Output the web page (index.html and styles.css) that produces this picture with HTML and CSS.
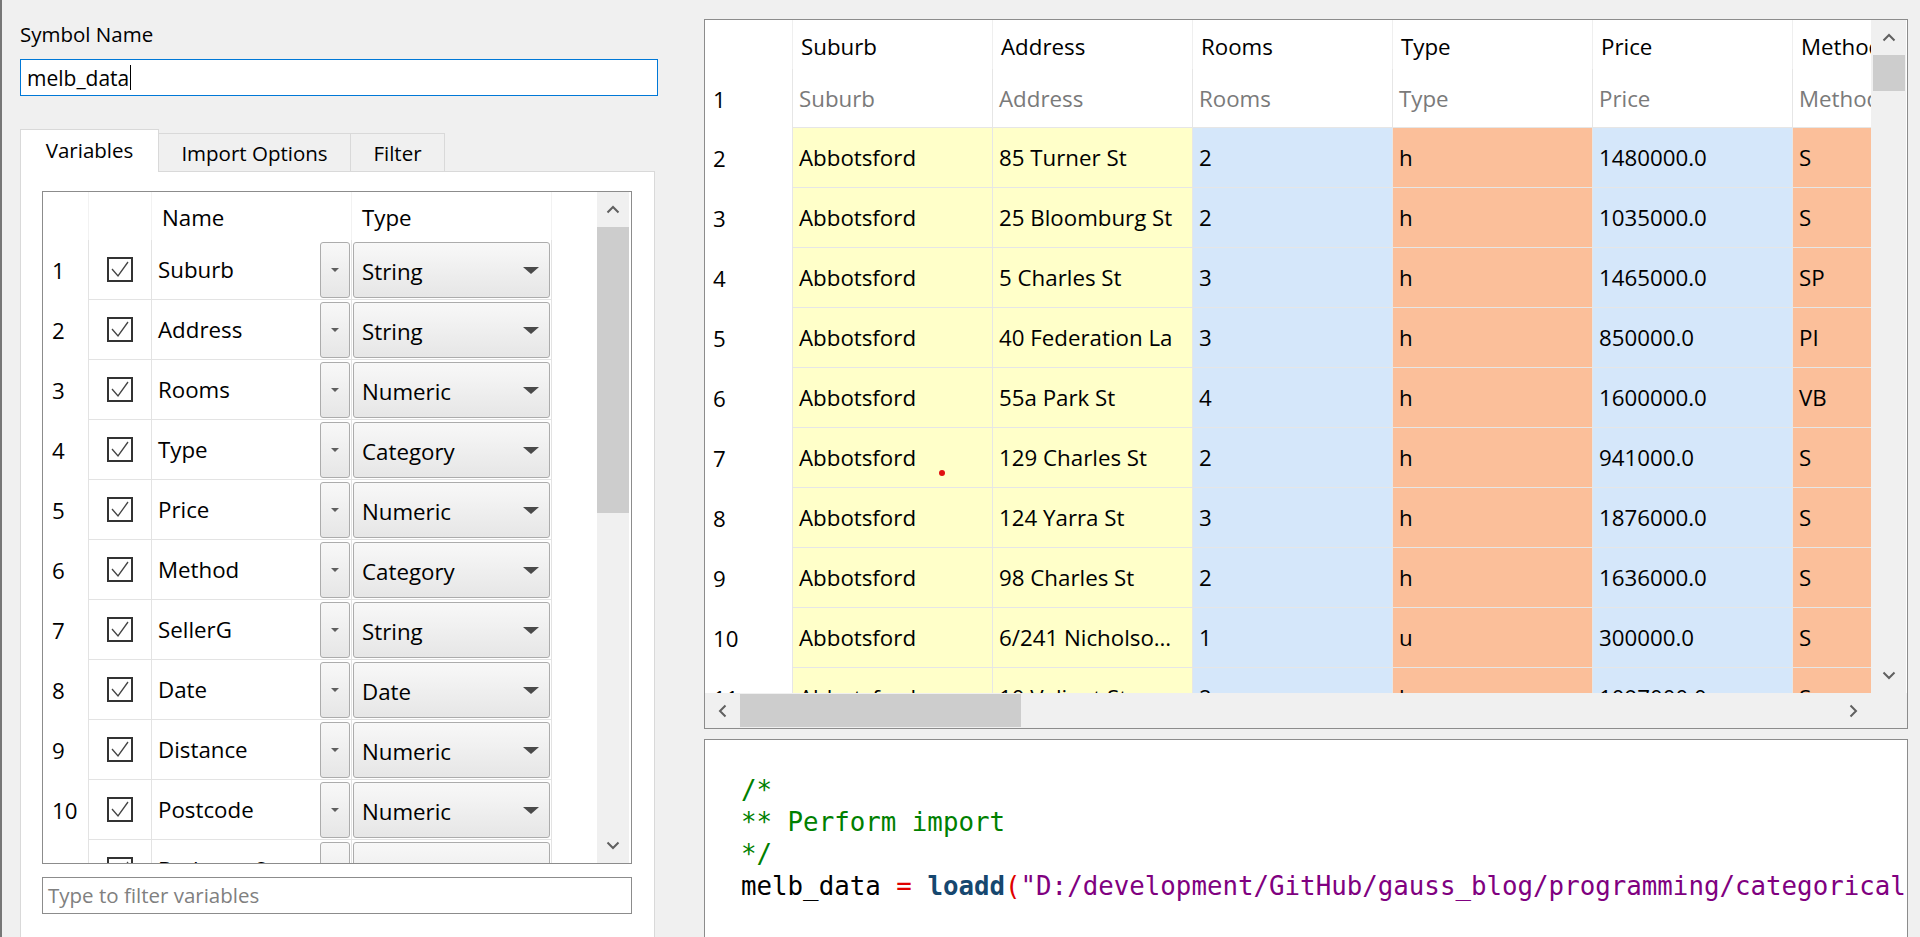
FILE: index.html
```html
<!DOCTYPE html>
<html>
<head>
<meta charset="utf-8">
<link rel="stylesheet" href="styles.css">
</head>
<body>
<div class="app">
  <div class="left">
    <div class="sym-label">Symbol Name</div>
    <div class="sym-input"><span>melb_data</span><span class="caret"></span></div>
    <div class="tabbar">
      <div class="tab active">Variables</div>
      <div class="tab tab-io">Import Options</div>
      <div class="tab tab-filter">Filter</div>
    </div>
    <div class="pane">
      <div class="vgrid">
        <div class="vbody">
          <div class="vhead">
            <div class="vnum"></div>
            <div class="vchk"></div>
            <div class="vname">Name</div>
            <div class="vtype">Type</div>
          </div>
          <div class="vrow"><div class="vnum">1</div><div class="vchk"><span class="cb"><svg width="22" height="21" viewBox="0 0 22 21"><polyline points="3,10 9,17 19,3" fill="none" stroke="#444" stroke-width="1.3"/></svg></span></div><div class="vname"><span class="nm">Suburb</span><span class="sbtn"><i class="tri-s"></i></span></div><div class="vtype"><span class="combo">String<i class="tri"></i></span></div></div>
          <div class="vrow"><div class="vnum">2</div><div class="vchk"><span class="cb"><svg width="22" height="21" viewBox="0 0 22 21"><polyline points="3,10 9,17 19,3" fill="none" stroke="#444" stroke-width="1.3"/></svg></span></div><div class="vname"><span class="nm">Address</span><span class="sbtn"><i class="tri-s"></i></span></div><div class="vtype"><span class="combo">String<i class="tri"></i></span></div></div>
          <div class="vrow"><div class="vnum">3</div><div class="vchk"><span class="cb"><svg width="22" height="21" viewBox="0 0 22 21"><polyline points="3,10 9,17 19,3" fill="none" stroke="#444" stroke-width="1.3"/></svg></span></div><div class="vname"><span class="nm">Rooms</span><span class="sbtn"><i class="tri-s"></i></span></div><div class="vtype"><span class="combo">Numeric<i class="tri"></i></span></div></div>
          <div class="vrow"><div class="vnum">4</div><div class="vchk"><span class="cb"><svg width="22" height="21" viewBox="0 0 22 21"><polyline points="3,10 9,17 19,3" fill="none" stroke="#444" stroke-width="1.3"/></svg></span></div><div class="vname"><span class="nm">Type</span><span class="sbtn"><i class="tri-s"></i></span></div><div class="vtype"><span class="combo">Category<i class="tri"></i></span></div></div>
          <div class="vrow"><div class="vnum">5</div><div class="vchk"><span class="cb"><svg width="22" height="21" viewBox="0 0 22 21"><polyline points="3,10 9,17 19,3" fill="none" stroke="#444" stroke-width="1.3"/></svg></span></div><div class="vname"><span class="nm">Price</span><span class="sbtn"><i class="tri-s"></i></span></div><div class="vtype"><span class="combo">Numeric<i class="tri"></i></span></div></div>
          <div class="vrow"><div class="vnum">6</div><div class="vchk"><span class="cb"><svg width="22" height="21" viewBox="0 0 22 21"><polyline points="3,10 9,17 19,3" fill="none" stroke="#444" stroke-width="1.3"/></svg></span></div><div class="vname"><span class="nm">Method</span><span class="sbtn"><i class="tri-s"></i></span></div><div class="vtype"><span class="combo">Category<i class="tri"></i></span></div></div>
          <div class="vrow"><div class="vnum">7</div><div class="vchk"><span class="cb"><svg width="22" height="21" viewBox="0 0 22 21"><polyline points="3,10 9,17 19,3" fill="none" stroke="#444" stroke-width="1.3"/></svg></span></div><div class="vname"><span class="nm">SellerG</span><span class="sbtn"><i class="tri-s"></i></span></div><div class="vtype"><span class="combo">String<i class="tri"></i></span></div></div>
          <div class="vrow"><div class="vnum">8</div><div class="vchk"><span class="cb"><svg width="22" height="21" viewBox="0 0 22 21"><polyline points="3,10 9,17 19,3" fill="none" stroke="#444" stroke-width="1.3"/></svg></span></div><div class="vname"><span class="nm">Date</span><span class="sbtn"><i class="tri-s"></i></span></div><div class="vtype"><span class="combo">Date<i class="tri"></i></span></div></div>
          <div class="vrow"><div class="vnum">9</div><div class="vchk"><span class="cb"><svg width="22" height="21" viewBox="0 0 22 21"><polyline points="3,10 9,17 19,3" fill="none" stroke="#444" stroke-width="1.3"/></svg></span></div><div class="vname"><span class="nm">Distance</span><span class="sbtn"><i class="tri-s"></i></span></div><div class="vtype"><span class="combo">Numeric<i class="tri"></i></span></div></div>
          <div class="vrow"><div class="vnum">10</div><div class="vchk"><span class="cb"><svg width="22" height="21" viewBox="0 0 22 21"><polyline points="3,10 9,17 19,3" fill="none" stroke="#444" stroke-width="1.3"/></svg></span></div><div class="vname"><span class="nm">Postcode</span><span class="sbtn"><i class="tri-s"></i></span></div><div class="vtype"><span class="combo">Numeric<i class="tri"></i></span></div></div>
          <div class="vrow"><div class="vnum">11</div><div class="vchk"><span class="cb"><svg width="22" height="21" viewBox="0 0 22 21"><polyline points="3,10 9,17 19,3" fill="none" stroke="#444" stroke-width="1.3"/></svg></span></div><div class="vname"><span class="nm">Bedroom2</span><span class="sbtn"><i class="tri-s"></i></span></div><div class="vtype"><span class="combo">Numeric<i class="tri"></i></span></div></div>
        </div>
        <div class="vscroll">
          <div class="sb-arrow"><svg width="14" height="9" viewBox="0 0 14 9"><polyline points="1.5,7.5 7,2 12.5,7.5" fill="none" stroke="#606060" stroke-width="2"/></svg></div>
          <div class="vthumb"></div>
          <div class="sb-fill"></div>
          <div class="sb-arrow"><svg width="14" height="9" viewBox="0 0 14 9"><polyline points="1.5,1.5 7,7 12.5,1.5" fill="none" stroke="#606060" stroke-width="2"/></svg></div>
        </div>
      </div>
      <div class="filter">Type to filter variables</div>
    </div>
  </div>

  <div class="right">
    <div class="tbox">
      <div class="tmain">
        <div class="tview">
          <div class="trow thead"><div class="rn"></div><div class="c">Suburb</div><div class="c">Address</div><div class="c">Rooms</div><div class="c">Type</div><div class="c">Price</div><div class="c">Method</div></div>
          <div class="trow tnames"><div class="rn">1</div><div class="c">Suburb</div><div class="c">Address</div><div class="c">Rooms</div><div class="c">Type</div><div class="c">Price</div><div class="c">Method</div></div>
          <div class="trow"><div class="rn">2</div><div class="c y">Abbotsford</div><div class="c y">85 Turner St</div><div class="c b">2</div><div class="c s">h</div><div class="c b">1480000.0</div><div class="c s">S</div></div>
          <div class="trow"><div class="rn">3</div><div class="c y">Abbotsford</div><div class="c y">25 Bloomburg St</div><div class="c b">2</div><div class="c s">h</div><div class="c b">1035000.0</div><div class="c s">S</div></div>
          <div class="trow"><div class="rn">4</div><div class="c y">Abbotsford</div><div class="c y">5 Charles St</div><div class="c b">3</div><div class="c s">h</div><div class="c b">1465000.0</div><div class="c s">SP</div></div>
          <div class="trow"><div class="rn">5</div><div class="c y">Abbotsford</div><div class="c y">40 Federation La</div><div class="c b">3</div><div class="c s">h</div><div class="c b">850000.0</div><div class="c s">PI</div></div>
          <div class="trow"><div class="rn">6</div><div class="c y">Abbotsford</div><div class="c y">55a Park St</div><div class="c b">4</div><div class="c s">h</div><div class="c b">1600000.0</div><div class="c s">VB</div></div>
          <div class="trow"><div class="rn">7</div><div class="c y">Abbotsford</div><div class="c y">129 Charles St</div><div class="c b">2</div><div class="c s">h</div><div class="c b">941000.0</div><div class="c s">S</div></div>
          <div class="trow"><div class="rn">8</div><div class="c y">Abbotsford</div><div class="c y">124 Yarra St</div><div class="c b">3</div><div class="c s">h</div><div class="c b">1876000.0</div><div class="c s">S</div></div>
          <div class="trow"><div class="rn">9</div><div class="c y">Abbotsford</div><div class="c y">98 Charles St</div><div class="c b">2</div><div class="c s">h</div><div class="c b">1636000.0</div><div class="c s">S</div></div>
          <div class="trow"><div class="rn">10</div><div class="c y">Abbotsford</div><div class="c y">6/241 Nicholso…</div><div class="c b">1</div><div class="c s">u</div><div class="c b">300000.0</div><div class="c s">S</div></div>
          <div class="trow"><div class="rn">11</div><div class="c y">Abbotsford</div><div class="c y">10 Valiant St</div><div class="c b">2</div><div class="c s">h</div><div class="c b">1097000.0</div><div class="c s">S</div></div>
        </div>
        <div class="tvscroll">
          <div class="sb-arrow"><svg width="14" height="9" viewBox="0 0 14 9"><polyline points="1.5,7.5 7,2 12.5,7.5" fill="none" stroke="#606060" stroke-width="2"/></svg></div>
          <div class="tvthumb"></div>
          <div class="sb-fill"></div>
          <div class="sb-arrow"><svg width="14" height="9" viewBox="0 0 14 9"><polyline points="1.5,1.5 7,7 12.5,1.5" fill="none" stroke="#606060" stroke-width="2"/></svg></div>
        </div>
      </div>
      <div class="tbottom">
        <div class="hscroll">
          <div class="hb-arrow"><svg width="9" height="14" viewBox="0 0 9 14"><polyline points="7.5,1.5 2,7 7.5,12.5" fill="none" stroke="#606060" stroke-width="2"/></svg></div>
          <div class="hthumb"></div>
          <div class="hb-fill"></div>
          <div class="hb-arrow"><svg width="9" height="14" viewBox="0 0 9 14"><polyline points="1.5,1.5 7,7 1.5,12.5" fill="none" stroke="#606060" stroke-width="2"/></svg></div>
        </div>
        <div class="corner"></div>
      </div>
    </div>
    <div class="code">
      <div class="ln cm">/*</div>
      <div class="ln cm">** Perform import</div>
      <div class="ln cm">*/</div>
      <div class="ln">melb_data <span class="op">=</span> <span class="fn">loadd</span><span class="op">(</span><span class="str">"D:/development/GitHub/gauss_blog/programming/categorical-data/melb_data.csv"</span><span class="op">);</span></div>
    </div>
  </div>
</div>
<div class="dot"></div>
</body>
</html>
```

FILE: styles.css
```css
* { box-sizing: border-box; }
html, body { margin: 0; padding: 0; }
body {
  width: 1920px;
  height: 937px;
  overflow: hidden;
  background: #f0f0f0;
  font-family: "Open Sans", "Noto Sans", sans-serif;
  color: #000;
  position: relative;
}
.app { display: flex; height: 937px; }

/* ---------- left ---------- */
.left {
  width: 704px;
  flex: none;
  border-left: 2px solid #777;
  padding-left: 18px;
  font-size: 20.5px;
}
.sym-label { padding-top: 19px; line-height: 30px; height: 50px; }
.sym-input {
  margin-top: 9px;
  width: 638px;
  height: 37px;
  border: 1px solid #0078d7;
  background: #fff;
  padding-left: 6px;
  line-height: 34px;
  font-size: 21px;
  display: flex;
  align-items: center;
}
.caret { display: inline-block; width: 1px; height: 25px; background: #000; margin-left: 1px; }

.tabbar {
  margin-top: 33px;
  height: 42px;
  display: flex;
  align-items: flex-end;
}
.tab {
  height: 38px;
  border: 1px solid #d9d9d9;
  border-bottom: none;
  background: #f0f0f0;
  display: flex;
  align-items: center;
  justify-content: center;
  padding-top: 1px;
}
.tab.active {
  width: 139px;
  height: 43px;
  margin-bottom: -1px;
  background: #fff;
  position: relative;
  z-index: 1;
  padding-top: 0;
  padding-bottom: 3px;
}
.tab-io { width: 192px; border-left: none; }
.tab-filter { width: 94px; border-left: none; }

.pane {
  width: 635px;
  height: 780px;
  background: #fff;
  border: 1px solid #d9d9d9;
  padding: 19px 0 0 21px;
}
.vgrid {
  width: 590px;
  height: 673px;
  border: 1px solid #8c8c8c;
  display: flex;
  background: #fff;
  font-size: 22.3px;
}
.vbody { width: 554px; overflow: hidden; }
.vhead { display: flex; height: 48px; }
.vhead > div { padding-top: 11px; line-height: 30px; }
.vhead .vchk, .vhead .vname, .vhead .vtype { border-bottom: none; border-left-color: #f2f2f2; }
.vhead .vname, .vhead .vtype { padding-left: 10px; }
.vhead .vtype { border-right-color: #f2f2f2; }
.vrow { display: flex; height: 60px; }
.vnum { width: 45px; flex: none; padding-left: 9px; line-height: 62px; }
.vchk {
  width: 63px; flex: none;
  border-left: 1px solid #e3e3e3;
  border-bottom: 1px solid #e3e3e3;
  display: flex; align-items: center; justify-content: center;
}
.vname {
  width: 200px; flex: none;
  border-left: 1px solid #e3e3e3;
  border-bottom: 1px solid #e3e3e3;
  display: flex;
}
.vtype {
  width: 201px; flex: none;
  border-left: 1px solid #e3e3e3;
  border-right: 1px solid #e3e3e3;
  border-bottom: 1px solid #e3e3e3;
}
.nm { padding-left: 6px; line-height: 60px; }
.cb {
  width: 26px; height: 25px;
  border: 2px solid #333;
  background: #fff;
  display: flex; align-items: center; justify-content: center;
}
.cb svg { display: block; }
.sbtn {
  margin-left: auto;
  margin-right: 1px;
  margin-top: 2px;
  width: 30px;
  height: 56px;
  border: 1px solid #acacac;
  border-radius: 3px;
  background: linear-gradient(#f8f8f8, #e6e6e6);
  display: flex;
  justify-content: center;
  padding-top: 25px;
}
.tri-s {
  width: 0; height: 0;
  border-left: 4px solid transparent;
  border-right: 4px solid transparent;
  border-top: 4px solid #5e5e5e;
}
.combo {
  margin: 2px 0 0 1px;
  width: 197px;
  height: 56px;
  border: 1px solid #acacac;
  border-radius: 3px;
  background: linear-gradient(#f8f8f8, #e6e6e6);
  display: flex;
  align-items: center;
  padding-left: 8px;
  padding-top: 2px;
}
.tri {
  margin-left: auto;
  margin-right: 10px;
  margin-bottom: 2px;
  width: 0; height: 0;
  border-left: 8px solid transparent;
  border-right: 8px solid transparent;
  border-top: 7px solid #4a4a4a;
}
.vscroll {
  width: 32px;
  background: #f0f0f0;
  display: flex;
  flex-direction: column;
}
.sb-arrow { height: 35px; display: flex; align-items: center; justify-content: center; flex: none; }
.vthumb { height: 286px; background: #cdcdcd; flex: none; }
.sb-fill { flex: 1; }
.filter {
  margin-top: 13px;
  width: 590px;
  height: 37px;
  border: 1px solid #8c8c8c;
  padding-left: 5px;
  line-height: 35px;
  color: #808080;
  font-size: 20.5px;
}

/* ---------- right ---------- */
.right {
  flex: 1;
  padding: 19px 12px 0 0;
  display: flex;
  flex-direction: column;
}
.tbox {
  width: 1204px;
  height: 710px;
  border: 1px solid #8c8c8c;
  background: #fff;
  display: flex;
  flex-direction: column;
  flex: none;
}
.tmain { display: flex; height: 673px; }
.tview { width: 1166px; overflow: hidden; font-size: 22.3px; }
.trow { display: flex; height: 60px; }
.trow .rn { width: 87px; flex: none; padding-left: 8px; line-height: 61px; }
.trow .c {
  width: 200px; flex: none;
  border-left: 1px solid #e6e6e6;
  border-bottom: 1px solid #e6e6e6;
  padding-left: 6px;
  line-height: 60px;
  white-space: nowrap;
  overflow: hidden;
}
.thead { height: 49px; }
.thead .c { border-bottom: none; line-height: 30px; padding-top: 12px; padding-left: 8px; border-left-color: #efefef; }
.tnames { height: 59px; }
.tnames .rn { line-height: 61px; }
.tnames .c { color: #7a7a7a; line-height: 59px; }
.c.y { background: #ffffc9; }
.c.b { background: #d5e7fa; }
.c.s { background: #fbbf9a; }
.tvscroll {
  width: 35px;
  padding-left: 2px;
  padding-right: 1px;
  background: #f0f0f0;
  display: flex;
  flex-direction: column;
}
.tvthumb { height: 36px; background: #cdcdcd; flex: none; }
.tbottom { display: flex; height: 35px; background: #f0f0f0; }
.hscroll { width: 1166px; display: flex; padding: 1px 0; }
.hb-arrow { width: 35px; display: flex; align-items: center; justify-content: center; flex: none; }
.hthumb { width: 281px; background: #cdcdcd; flex: none; }
.hb-fill { flex: 1; }
.corner { flex: 1; background: #f0f0f0; }

.code {
  margin-top: 10px;
  width: 1204px;
  height: 240px;
  flex: none;
  border: 1px solid #8c8c8c;
  background: #fff;
  padding: 34px 0 0 36px;
  font-family: "DejaVu Sans Mono", "Liberation Mono", monospace;
  font-size: 25.8px;
  white-space: nowrap;
  overflow: hidden;
}
.ln { height: 32px; line-height: 32px; }
.cm { color: #008000; }
.op { color: #e00000; }
.fn { color: #16476f; font-weight: bold; }
.str { color: #800080; }

.dot {
  position: absolute;
  left: 939px;
  top: 470px;
  width: 6px;
  height: 6px;
  border-radius: 50%;
  background: #e01010;
}
```
